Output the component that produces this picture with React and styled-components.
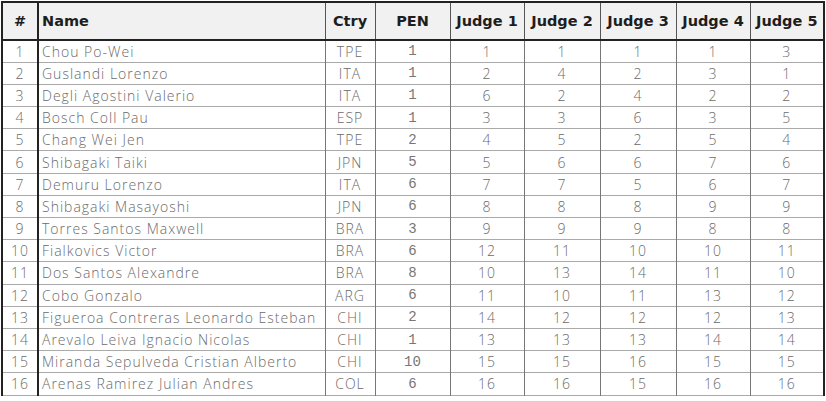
import React from "react"
import styled, { createGlobalStyle } from "styled-components"

const GlobalStyle = createGlobalStyle`
  html, body {
    margin: 0;
    padding: 0;
    background: #fff;
  }
  body {
    font-family: "Open Sans", "DejaVu Sans", sans-serif;
  }
`

const Page = styled.div`
  padding: 1px 3px 0 1px;
`

const Table = styled.table`
  width: 822px;
  table-layout: fixed;
  border-collapse: collapse;
  border: 2px solid #222;
  border-bottom: none;
`

const HeadRow = styled.tr`
  height: 38px;
  background: #f1f1f1;
  border-bottom: 2px solid #222;
`

const HeadCell = styled.th`
  padding: 0 3px;
  font-family: "DejaVu Sans", sans-serif;
  font-size: 14.5px;
  font-weight: 700;
  color: #1e1e1e;
  text-align: ${({ align }) => align || "center"};
  white-space: nowrap;
  border-left: 1px solid #555;
  &:first-child {
    border-left: none;
  }
  &:nth-child(2) {
    border-left: 2px solid #222;
  }
`

const Row = styled.tr`
  height: 22.2px;
  border-bottom: 1px solid #aaa;
`

const Cell = styled.td`
  padding: 0 3px;
  font-size: 14px;
  font-weight: ${({ mono }) => (mono ? 400 : 300)};
  letter-spacing: ${({ mono }) => (mono ? "0" : "1px")};
  font-family: ${({ mono }) =>
    mono ? '"Liberation Mono", monospace' : '"Open Sans", sans-serif'};
  color: ${({ mono }) => (mono ? "#777" : "#6a6a6a")};
  text-align: ${({ align }) => align || "center"};
  white-space: nowrap;
  overflow: hidden;
  border-left: 1px solid #777;
  &:first-child {
    border-left: none;
  }
  &:nth-child(2) {
    border-left: 2px solid #222;
  }
`

const widths = [36, 287, 50, 75, 74, 76, 76, 74, 74]

const rows = [
  ["Chou Po-Wei", "TPE", 1, [1, 1, 1, 1, 3]],
  ["Guslandi Lorenzo", "ITA", 1, [2, 4, 2, 3, 1]],
  ["Degli Agostini Valerio", "ITA", 1, [6, 2, 4, 2, 2]],
  ["Bosch Coll Pau", "ESP", 1, [3, 3, 6, 3, 5]],
  ["Chang Wei Jen", "TPE", 2, [4, 5, 2, 5, 4]],
  ["Shibagaki Taiki", "JPN", 5, [5, 6, 6, 7, 6]],
  ["Demuru Lorenzo", "ITA", 6, [7, 7, 5, 6, 7]],
  ["Shibagaki Masayoshi", "JPN", 6, [8, 8, 8, 9, 9]],
  ["Torres Santos Maxwell", "BRA", 3, [9, 9, 9, 8, 8]],
  ["Fialkovics Victor", "BRA", 6, [12, 11, 10, 10, 11]],
  ["Dos Santos Alexandre", "BRA", 8, [10, 13, 14, 11, 10]],
  ["Cobo Gonzalo", "ARG", 6, [11, 10, 11, 13, 12]],
  ["Figueroa Contreras Leonardo Esteban", "CHI", 2, [14, 12, 12, 12, 13]],
  ["Arevalo Leiva Ignacio Nicolas", "CHI", 1, [13, 13, 13, 14, 14]],
  ["Miranda Sepulveda Cristian Alberto", "CHI", 10, [15, 15, 16, 15, 15]],
  ["Arenas Ramirez Julian Andres", "COL", 6, [16, 16, 15, 16, 16]],
]

const judges = [1, 2, 3, 4, 5]

export default function App() {
  return (
    <Page>
      <GlobalStyle />
      <Table>
        <colgroup>
          {widths.map((w, i) => (
            <col key={i} style={{ width: w }} />
          ))}
        </colgroup>
        <thead>
          <HeadRow>
            <HeadCell>#</HeadCell>
            <HeadCell align="left">Name</HeadCell>
            <HeadCell>Ctry</HeadCell>
            <HeadCell>PEN</HeadCell>
            {judges.map(j => (
              <HeadCell key={j}>Judge {j}</HeadCell>
            ))}
          </HeadRow>
        </thead>
        <tbody>
          {rows.map(([name, ctry, pen, scores], i) => (
            <Row key={name}>
              <Cell>{i + 1}</Cell>
              <Cell align="left">{name}</Cell>
              <Cell>{ctry}</Cell>
              <Cell mono>{pen}</Cell>
              {scores.map((s, k) => (
                <Cell key={k}>{s}</Cell>
              ))}
            </Row>
          ))}
        </tbody>
      </Table>
    </Page>
  )
}
